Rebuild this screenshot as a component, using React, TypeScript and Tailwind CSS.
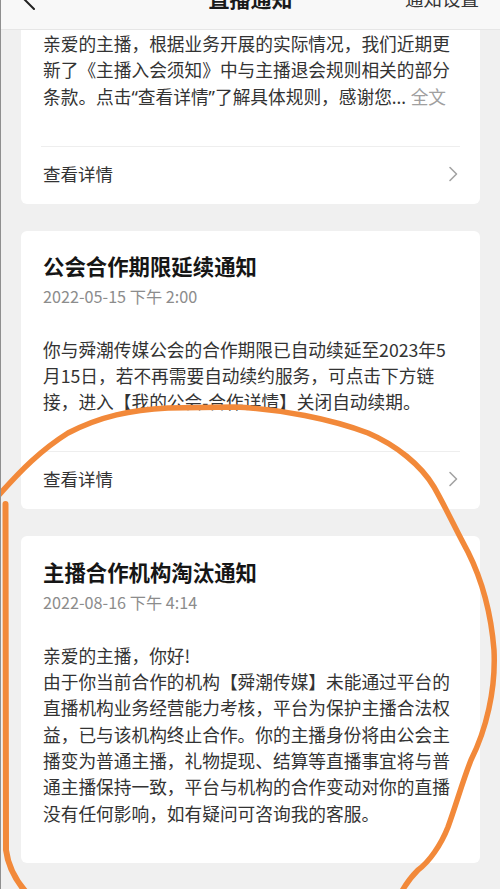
import React from "react";

const font = { fontFamily: '"Noto Sans CJK SC", "Noto Sans", sans-serif' };
const latin = { fontFamily: '"Noto Sans", "Noto Sans CJK SC", sans-serif' };

function Chevron() {
  return (
    <svg width="10" height="16" viewBox="0 0 10 16" fill="none">
      <path d="M2 1.5 L8.5 8 L2 14.5" stroke="#a3a3a3" strokeWidth="1.6" strokeLinecap="round" strokeLinejoin="round" />
    </svg>
  );
}

function DetailRow() {
  return (
    <>
      <div className="mt-[36px] h-px bg-[#eeeeee] -mx-[2px]" />
      <div className="h-[57px] pb-[2px] flex items-center justify-between">
        <span className="text-[17.5px] text-[#333333]">查看详情</span>
        <span className="flex items-center">
          <Chevron />
        </span>
      </div>
    </>
  );
}

function CardHead({ title, date }: { title: string; date: string }) {
  return (
    <>
      <div className="text-[21.4px] leading-[30px] font-bold text-[#161616]">{title}</div>
      <div className="mt-[5px] text-[16.2px] leading-[20px] text-[#8c8c8c]">{date}</div>
    </>
  );
}

export default function App() {
  return (
    <div className="relative w-[500px] h-[889px] overflow-hidden bg-[#f0f0f0] border-l border-[#8f8f8f]" style={font}>
      {/* header */}
      <div className="h-[30px] bg-[#f8f8f8] border-b border-[#e6e6e6] overflow-hidden">
        <div className="relative -mt-[25px] h-[48px] flex items-center justify-center">
          <svg className="absolute left-[21px]" width="14" height="22" viewBox="0 0 14 22" fill="none">
            <path d="M12 1 L2 11 L12 21" stroke="#222222" strokeWidth="2" strokeLinecap="round" strokeLinejoin="round" />
          </svg>
          <span className="text-[21px] font-bold text-[#1a1a1a]">直播通知</span>
          <span className="absolute right-[21px] text-[18.5px] text-[#333333]">通知设置</span>
        </div>
      </div>

      <div className="px-[20px] flex flex-col gap-[27px]">
        {/* card 1 (scrolled) */}
        <div className="bg-white rounded-b-[6px] px-[22px]">
          <div className="text-[17.7px] leading-[26.3px] text-[#333333]">
            亲爱的主播，根据业务开展的实际情况，我们近期更
            <br />
            新了《主播入会须知》中与主播退会规则相关的部分
            <br />
            <span className="whitespace-nowrap">
              条款。点击<span style={latin}>“</span>查看详情<span style={latin}>”</span>了解具体规则，感谢您<span style={latin}>... </span>
              <span className="text-[#a0a0a0]">全文</span>
            </span>
          </div>
          <DetailRow />
        </div>

        {/* card 2 */}
        <div className="bg-white rounded-[6px] px-[22px] pt-[20px]">
          <CardHead title="公会合作期限延续通知" date="2022-05-15 下午 2:00" />
          <div className="mt-[30px] text-[17.7px] leading-[26.3px] text-[#333333]">
            你与舜潮传媒公会的合作期限已自动续延至2023年5
            <br />
            月15日，若不再需要自动续约服务，可点击下方链
            <br />
            接，进入【我的公会-合作详情】关闭自动续期。
          </div>
          <DetailRow />
        </div>

        {/* card 3 */}
        <div className="bg-white rounded-[6px] px-[22px] pt-[21px] pb-[37px]">
          <CardHead title="主播合作机构淘汰通知" date="2022-08-16 下午 4:14" />
          <div className="mt-[30px] text-[17.7px] leading-[26.3px] text-[#333333]">
            亲爱的主播，你好!
            <br />
            由于你当前合作的机构【舜潮传媒】未能通过平台的
            <br />
            直播机构业务经营能力考核，平台为保护主播合法权
            <br />
            益，已与该机构终止合作。你的主播身份将由公会主
            <br />
            播变为普通主播，礼物提现、结算等直播事宜将与普
            <br />
            通主播保持一致，平台与机构的合作变动对你的直播
            <br />
            没有任何影响，如有疑问可咨询我的客服。
          </div>
        </div>
      </div>

      {/* hand-drawn annotation */}
      <svg className="absolute inset-0 pointer-events-none" width="500" height="889" viewBox="0 0 500 889" fill="none">
        <path
          d="M-2 495 C 20 470 40 450 67 433 C 100 416 130 410 167 408 L 233 407 C 280 409 330 419 367 433 C 395 445 420 465 433 487 C 445 508 455 530 467 552 C 480 578 490 612 493 650 C 495 690 485 730 470 760 C 462 780 455 805 447 827 C 440 845 428 862 417 870 C 410 877 405 884 401 891"
          stroke="#f2893a"
          strokeWidth="5.5"
          strokeLinecap="round"
          strokeLinejoin="round"
        />
        <path
          d="M4.5 504 L5 850 C 7 866 14 879 24 891"
          stroke="#f2893a"
          strokeWidth="6"
          strokeLinecap="round"
          strokeLinejoin="round"
        />
      </svg>
    </div>
  );
}
